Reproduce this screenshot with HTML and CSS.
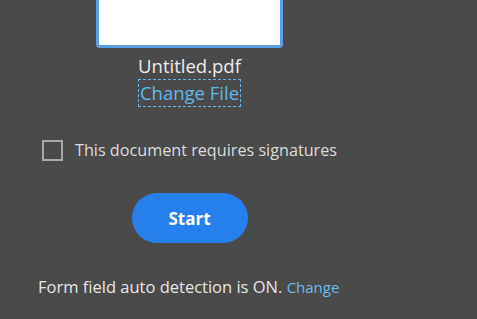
FILE: index.html
```html
<!DOCTYPE html>
<html lang="en">
<head>
    <meta charset="UTF-8">
    <title>Prepare Form</title>
    <link rel="stylesheet" href="styles.css">
</head>
<body>
    <div class="panel">
        <div class="file">
            <div class="preview"></div>
            <div class="file-name">Untitled.pdf</div>
            <a href="#" class="change-file">Change File</a>
        </div>

        <label class="sign-option">
            <span class="checkbox"></span>
            This document requires signatures
        </label>

        <div class="actions">
            <button class="start-btn">Start</button>
        </div>

        <p class="detection">Form field auto detection is ON. <a href="#" class="change-link">Change</a></p>
    </div>
</body>
</html>
```

FILE: styles.css
```css
* { margin: 0; padding: 0; box-sizing: border-box; }
html, body { height: 100%; }
body {
    background: #4a4a4a;
    font-family: 'Open Sans', 'Noto Sans', sans-serif;
    color: #e6e6e6;
    overflow: hidden;
}
.panel { width: 379px; }
.file {
    display: flex;
    flex-direction: column;
    align-items: center;
}
.preview {
    width: 187px;
    height: 48px;
    background: #fff;
    border: 3px solid #5a9ee6;
    border-top: 0;
    border-radius: 0 0 4px 4px;
}
.file-name {
    margin-top: 5px;
    font-size: 18.5px;
    line-height: 25px;
    color: #ececec;
}
.change-file {
    margin-top: 2px;
    font-size: 18.5px;
    line-height: 26px;
    color: #62b8ec;
    text-decoration: none;
    outline: 1px dashed #62b8ec;
    padding: 0 1px;
}
.sign-option {
    display: flex;
    align-items: center;
    gap: 12px;
    margin: 33px 0 0 42px;
    font-size: 16.2px;
    color: #dcdcdc;
}
.checkbox {
    width: 21px;
    height: 21px;
    border: 2px solid #a8a8a8;
}
.actions {
    display: flex;
    justify-content: center;
    margin-top: 32px;
}
.start-btn {
    width: 116px;
    height: 50px;
    border: none;
    border-radius: 25px;
    background: #2680eb;
    color: #fff;
    font-family: inherit;
    font-size: 17px;
    font-weight: 700;
}
.detection {
    margin: 32px 0 0 38px;
    font-size: 16.5px;
    color: #e6e6e6;
}
.change-link {
    color: #6cbcee;
    text-decoration: none;
    font-size: 15px;
}
```
